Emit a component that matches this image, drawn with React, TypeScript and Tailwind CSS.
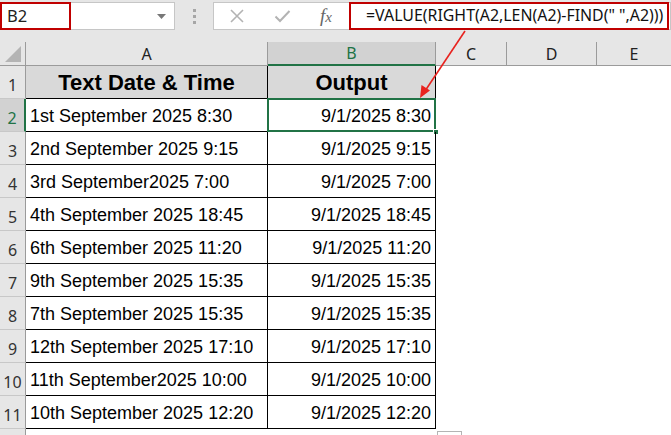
import React from "react";

const rows: [string, string][] = [
  ["1st September 2025 8:30", "9/1/2025 8:30"],
  ["2nd September 2025 9:15", "9/1/2025 9:15"],
  ["3rd September2025 7:00", "9/1/2025 7:00"],
  ["4th September 2025 18:45", "9/1/2025 18:45"],
  ["6th September 2025 11:20", "9/1/2025 11:20"],
  ["9th September 2025 15:35", "9/1/2025 15:35"],
  ["7th September 2025 15:35", "9/1/2025 15:35"],
  ["12th September 2025 17:10", "9/1/2025 17:10"],
  ["11th September2025 10:00", "9/1/2025 10:00"],
  ["10th September 2025 12:20", "9/1/2025 12:20"],
];

const ui = { fontFamily: '"Noto Sans", "Open Sans", sans-serif' };
const cell = { fontFamily: '"Liberation Sans", Arial, sans-serif' };

function RowHead({ n, sel }: { n: number; sel?: boolean }) {
  return (
    <div
      className={`h-[33px] flex items-end justify-center pb-[1px] text-[16px] border-b border-[#c8c8c8] ${
        sel
          ? "bg-[#d2d2d2] text-[#217346] border-r-2 border-r-[#217346]"
          : "bg-[#e6e6e6] text-[#333] border-r border-r-[#9b9b9b]"
      }`}
      style={ui}
    >
      {n}
    </div>
  );
}

export default function App() {
  return (
    <div className="relative w-[671px] h-[435px] bg-white overflow-hidden">
      {/* Formula bar */}
      <div className="h-[42px] bg-[#e6e6e6] flex items-start pt-[2px]">
        <div className="relative w-[175px] h-[28px] bg-white border border-[#c6c6c6] flex items-center pl-[6px]">
          <span className="text-[16.5px] text-[#222]" style={ui}>B2</span>
          <svg className="absolute right-[8px] top-[11px]" width="9" height="5" viewBox="0 0 9 5">
            <polygon points="0,0 9,0 4.5,5" fill="#777" />
          </svg>
          <div className="absolute left-[-1px] top-[-1px] w-[71px] h-[28px] border-2 border-[#c00000]" />
        </div>
        <div className="w-[38px] h-[28px] flex flex-col items-center justify-center gap-[3px]">
          <div className="w-[3px] h-[3px] bg-[#a6a6a6]" />
          <div className="w-[3px] h-[3px] bg-[#a6a6a6]" />
          <div className="w-[3px] h-[3px] bg-[#a6a6a6]" />
        </div>
        <div className="flex-1 h-[28px] bg-white border border-[#c6c6c6] flex items-center relative">
          <div className="w-[136px] flex items-center">
            <svg className="ml-[15px]" width="16" height="16" viewBox="0 0 16 16">
              <path d="M2 2 L14 14 M14 2 L2 14" stroke="#b3b3b3" strokeWidth="1.6" />
            </svg>
            <svg className="ml-[29px]" width="17" height="14" viewBox="0 0 17 14">
              <path d="M1.5 7.5 L6 12 L15.5 2" stroke="#b3b3b3" strokeWidth="2" fill="none" />
            </svg>
            <span
              className="ml-[29px] text-[19px] italic text-[#666]"
              style={{ fontFamily: '"Liberation Serif", "Times New Roman", serif' }}
            >
              f<span className="text-[15px]">x</span>
            </span>
          </div>
          <div className="absolute left-[135px] right-[1px] top-[-1px] h-[28px] border-2 border-[#c00000] flex items-center pl-[15px]">
            <span className="text-[15.9px] text-[#111] whitespace-nowrap" style={ui}>
              =VALUE(RIGHT(A2,LEN(A2)-FIND(" ",A2)))
            </span>
          </div>
        </div>
      </div>

      {/* Grid */}
      <div className="grid grid-cols-[26px_242px_168px_71px_90px_74px]">
        {/* header row */}
        <div className="h-[24px] bg-[#e6e6e6] border-r border-b border-[#9b9b9b] relative">
          <svg className="absolute right-[4px] bottom-[3px]" width="16" height="16" viewBox="0 0 16 16">
            <polygon points="16,0 16,16 0,16" fill="#b4b4b4" />
          </svg>
        </div>
        <div className="h-[24px] bg-[#e6e6e6] border-r border-b border-[#9b9b9b] flex items-center justify-center text-[16px] text-[#222]" style={ui}>A</div>
        <div className="h-[24px] bg-[#d2d2d2] border-r border-[#9b9b9b] border-b-2 border-b-[#217346] flex items-center justify-center text-[16px] text-[#217346]" style={ui}>B</div>
        <div className="h-[24px] bg-[#e6e6e6] border-r border-b border-[#9b9b9b] flex items-center justify-center text-[16px] text-[#222]" style={ui}>C</div>
        <div className="h-[24px] bg-[#e6e6e6] border-r border-b border-[#9b9b9b] flex items-center justify-center text-[16px] text-[#222]" style={ui}>D</div>
        <div className="h-[24px] bg-[#e6e6e6] border-b border-[#9b9b9b] flex items-center justify-center text-[16px] text-[#222]" style={ui}>E</div>

        {/* row 1 */}
        <RowHead n={1} />
        <div className="h-[33px] bg-[#d9d9d9] border-r border-b border-black flex items-center justify-center pt-[1px] font-bold text-[22px] text-black" style={cell}>
          Text Date &amp; Time
        </div>
        <div className="h-[33px] bg-[#d9d9d9] border-r border-b border-black flex items-center justify-center pt-[1px] font-bold text-[22px] text-black" style={cell}>
          Output
        </div>
        <div className="h-[33px]" />
        <div className="h-[33px]" />
        <div className="h-[33px]" />

        {rows.map(([a, b], i) => (
          <React.Fragment key={i}>
            <RowHead n={i + 2} sel={i === 0} />
            <div className="h-[33px] border-r border-b border-black flex items-center pl-[4px] pt-[2px] text-[18px] text-black whitespace-nowrap" style={cell}>
              {a}
            </div>
            <div className="relative h-[33px] border-r border-b border-black flex items-center justify-end pr-[4px] pt-[2px] text-[18px] text-black whitespace-nowrap" style={cell}>
              {b}
              {i === 0 && (
                <>
                  <div className="absolute left-[-1px] top-[-1px] right-[-1px] bottom-[-1px] border-2 border-[#217346]" />
                  <div className="absolute right-[-4px] bottom-[-4px] w-[6px] h-[6px] bg-[#217346] border border-white" />
                </>
              )}
            </div>
            <div className="h-[33px]" />
            <div className="h-[33px]" />
            <div className="h-[33px]" />
          </React.Fragment>
        ))}
        <div className="h-[10px] bg-[#e6e6e6] border-r border-[#9b9b9b]" />
        <div />
        <div />
        <div className="h-[10px] pt-[2px] pl-[1px]">
          <div className="w-[25px] h-[8px] border border-b-0 border-[#b4b4b4]" />
        </div>
      </div>

      {/* Arrow */}
      <svg className="absolute left-0 top-0 pointer-events-none" width="671" height="435">
        <line x1="465" y1="31" x2="425" y2="91" stroke="#e8231f" strokeWidth="1.6" />
        <polygon points="420,98 421.5,85 430,90.5" fill="#e8231f" />
      </svg>
    </div>
  );
}
